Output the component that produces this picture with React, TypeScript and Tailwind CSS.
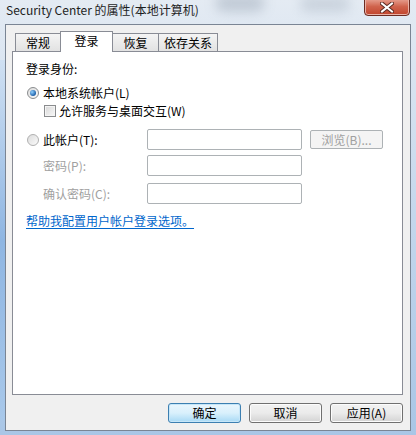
import React from "react";

const font = "font-['Noto_Sans_CJK_SC','Noto_Sans',sans-serif]";

function Radio({ checked }: { checked?: boolean }) {
  return (
    <span className="flex h-[12px] w-[12px] items-center justify-center rounded-full border border-[#8a8c8e] bg-gradient-to-br from-[#dcdcdc] to-[#fbfbfb]">
      {checked && <span className="h-[6px] w-[6px] rounded-full bg-[radial-gradient(circle_at_35%_35%,#8fd0ff,#1d5fa8_70%)]" />}
    </span>
  );
}

function Tab({ label, active, w }: { label: string; active?: boolean; w: string }) {
  if (active)
    return (
      <div className={`relative z-10 -mb-px -mx-px flex h-[21px] items-start justify-center border border-b-0 border-[#898c95] bg-white pt-[1px] text-[12px] leading-[16px] ${w}`}>
        {label}
      </div>
    );
  return (
    <div className={`flex h-[18px] items-center justify-center border border-b-0 border-[#898c95] bg-gradient-to-b from-[#f4f4f4] to-[#e2e2e2] text-[12px] leading-[16px] ${w}`}>
      {label}
    </div>
  );
}

function Btn({ label, primary }: { label: string; primary?: boolean }) {
  return (
    <div
      className={
        primary
          ? "flex h-[20px] w-[73px] items-center justify-center rounded-[3px] border border-[#3c7fb1] bg-gradient-to-b from-[#eaf6fd] via-[#d9f0fc] to-[#a7d9f5] text-[12px] shadow-[inset_0_0_0_1px_#c6e6f8]"
          : "flex h-[20px] w-[73px] items-center justify-center rounded-[3px] border border-[#707070] bg-gradient-to-b from-[#f2f2f2] via-[#ebebeb] to-[#d3d3d3] text-[12px] shadow-[inset_0_0_0_1px_#fcfcfc]"
      }
    >
      {label}
    </div>
  );
}

export default function App() {
  return (
    <div className={`relative h-[435px] w-[416px] overflow-hidden bg-gradient-to-b from-[#e4ebf3] via-[#c4d7ec] to-[#a9c6e6] text-black ${font}`}>
      {/* blurred glass behind title */}
      <div className="absolute left-[215px] top-[-6px] h-[18px] w-[50px] rounded-full bg-[#8f9cac] opacity-40 blur-[6px]" />
      <div className="absolute left-[300px] top-[-4px] h-[16px] w-[50px] rounded-full bg-[#8f9cac] opacity-30 blur-[6px]" />
      <div className="absolute left-[0px] top-[60px] h-[360px] w-[5px] bg-gradient-to-b from-[#cfe0f2] via-[#8fb6e2] to-[#a8c8ea]" />

      {/* close button */}
      <div className="absolute right-[6px] top-[-3px] flex h-[19px] w-[46px] items-center justify-center rounded-b-[4px] border border-[#6b2b22] bg-gradient-to-b from-[#e9a99b] via-[#d0634d] to-[#c0442c] pt-[2px] shadow-[inset_0_0_0_1px_#e9b3a8]">
        <svg width="14" height="11" viewBox="0 0 14 11">
          <path d="M2 1.5 L12 9.5 M12 1.5 L2 9.5" stroke="#5a2a22" strokeWidth="4" strokeLinecap="square" />
          <path d="M2 1.5 L12 9.5 M12 1.5 L2 9.5" stroke="#fff" strokeWidth="2" strokeLinecap="square" />
        </svg>
      </div>

      <div className="h-[24px] pl-[6px] pt-[1px] text-[12px] leading-[18px] text-[#1e1e1e]">
        Security Center 的属性(本地计算机)
      </div>

      <div className="ml-[5px] flex h-[407px] w-[406px] flex-col border border-[#7a8594] bg-[#f0f0f0]">
        {/* tabs */}
        <div className="ml-[9px] mt-[6px] flex h-[20px] items-end">
          <Tab label="常规" w="w-[46px]" />
          <Tab label="登录" active w="w-[53px]" />
          <Tab label="恢复" w="w-[46px] border-r-0" />
          <Tab label="依存关系" w="w-[60px]" />
        </div>

        {/* panel */}
        <div className="ml-[6px] flex h-[344px] w-[391px] flex-col border border-[#898c95] bg-white text-[12px] leading-[16px]">
          <div className="ml-[13px] mt-[9px]">登录身份:</div>

          <div className="ml-[14px] mt-[8px] flex items-center gap-[4px]">
            <Radio checked />
            <span>本地系统帐户(L)</span>
          </div>

          <div className="ml-[31px] mt-[2px] flex items-center gap-[3px]">
            <span className="h-[12px] w-[12px] border border-[#8a8c8e] bg-gradient-to-br from-[#d8d8d8] to-[#f8f8f8] shadow-[inset_0_0_0_1px_#f4f4f4]" />
            <span>允许服务与桌面交互(W)</span>
          </div>

          <div className="ml-[13px] mt-[10px] flex h-[21px] items-center">
            <div className="flex w-[121px] items-center gap-[4px] pl-[1px]">
              <span className="[&>span]:border-[#b0b0b0]">
                <Radio />
              </span>
              <span>此帐户(T):</span>
            </div>
            <div className="h-[21px] w-[155px] rounded-[2px] border border-[#adb2b5] bg-white" />
            <div className="ml-[8px] flex h-[19px] w-[73px] items-center justify-center rounded-[2px] border border-[#adb2b5] bg-[#f4f4f4] text-[#a0a0a0]">
              浏览(B)...
            </div>
          </div>

          <div className="ml-[13px] mt-[5px] flex h-[21px] items-center">
            <div className="w-[121px] pl-[17px] text-[#a0a0a0]">密码(P):</div>
            <div className="h-[21px] w-[155px] rounded-[2px] border border-[#adb2b5] bg-white" />
          </div>

          <div className="ml-[13px] mt-[7px] flex h-[21px] items-center">
            <div className="w-[121px] pl-[17px] text-[#a0a0a0]">确认密码(C):</div>
            <div className="h-[21px] w-[155px] rounded-[2px] border border-[#adb2b5] bg-white" />
          </div>

          <div className="ml-[13px] mt-[9px] text-[#0066cc] underline underline-offset-2">帮助我配置用户帐户登录选项。</div>
        </div>

        {/* buttons */}
        <div className="ml-[162px] mt-[8px] flex gap-[8px]">
          <Btn label="确定" primary />
          <Btn label="取消" />
          <Btn label="应用(A)" />
        </div>
      </div>
    </div>
  );
}
